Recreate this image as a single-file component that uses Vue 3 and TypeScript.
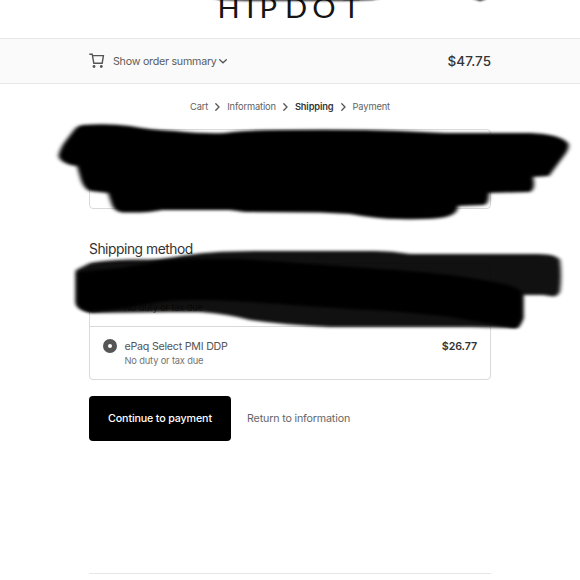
<script setup lang="ts">
interface Crumb {
  label: string
  current?: boolean
}

const crumbs: Crumb[] = [
  { label: 'Cart' },
  { label: 'Information' },
  { label: 'Shipping', current: true },
  { label: 'Payment' },
]
</script>

<template>
  <div class="page">
    <header class="brand">
      <svg class="logo" width="580" height="38" viewBox="0 0 580 38" aria-label="HIPDOT">
        <text transform="scale(1.1 1)" x="197.8 223.9 236 259.1 283.8 311.6" y="17.8">HIPDOT</text>
      </svg>
    </header>

    <section class="summary">
      <div class="column summary-row">
        <svg class="cart" width="16" height="16" viewBox="0 0 16 16">
          <path d="M.8 1.2H3.2L4.8 10.2H13.2L14.4 2.6H3.5" />
          <circle cx="5" cy="13.5" r="1.4" />
          <circle cx="12.3" cy="13.5" r="1.4" />
        </svg>
        <span class="toggle">Show order summary</span>
        <svg class="caret" width="8" height="6" viewBox="0 0 8 6"><path d="M.7 1.7L4 4.8L7.3 1.7" /></svg>
        <strong class="total">$47.75</strong>
      </div>
    </section>

    <main class="column">
      <nav class="crumbs">
        <template v-for="(crumb, i) in crumbs" :key="crumb.label">
          <svg v-if="i > 0" width="5" height="8" viewBox="0 0 5 8"><path d="M.8 .8L4 4L.8 7.2" /></svg>
          <span :class="{ current: crumb.current }">{{ crumb.label }}</span>
        </template>
      </nav>

      <section class="card review"></section>

      <h2>Shipping method</h2>
      <section class="card methods">
        <div class="method first">
          <small>No duty or tax due</small>
        </div>
        <div class="method">
          <span class="radio"></span>
          <div class="details">
            <span class="name">ePaq Select PMI DDP</span>
            <small>No duty or tax due</small>
          </div>
          <strong class="price">$26.77</strong>
        </div>
      </section>

      <div class="actions">
        <button type="button">Continue to payment</button>
        <a>Return to information</a>
      </div>
      <footer></footer>
    </main>

    <svg class="scribbles" width="580" height="580" viewBox="0 0 580 580">
      <defs>
        <filter id="soft" x="-5%" y="-15%" width="110%" height="130%"><feGaussianBlur stdDeviation="1.9 1.4" /></filter>
        <filter id="thin" filterUnits="userSpaceOnUse" x="180" y="-10" width="330" height="24"><feGaussianBlur stdDeviation="1" /></filter>
      </defs>
      <path filter="url(#thin)" d="M205 -4H390L372 0L350 .8H245L220 0ZM466 -4L480 1L486 -1V-4Z" />
      <path filter="url(#soft)" d="M82 125Q108 123 130 126Q150 130 175 131Q205 134 225 133Q245 130 280 130Q350 129 400 131L445 133H530Q560 134 568 143Q570 147 566 153L549 176L533 177Q536 189 530 192L489 193Q489 204 484 205L458 206Q458 214 446 217Q430 220 398 219Q378 219 350 214L320 212.5L245 212L230 210H162Q150 213 122 212.5Q114 211 112 205L108 193L90 191Q84 189 81 180L77 166Q61 164 58.5 156Q59 151 64 143L74 130Q77 126 82 125Z" />
      <path class="wash" filter="url(#soft)" d="M76 270L90 263Q104 260 130 259.5Q160 260 175 257Q207 251 255 251H375Q392 251 410 254H538Q556 254 560 260Q562 276 560 291Q558 298 550 296L543 295H523L523 318Q520 328 515 328L470 327H330Q285 325 250 320Q228 314 200 312H170L92 313Q76 310 76 302Z" />
      <path filter="url(#soft)" d="M77 272L120 268L150 263Q175 258 240 259Q300 263 380 269Q450 273 500 283Q520 287 522 293V318L517 328Q490 324 450 317Q400 311 350 309L250 302Q190 298 160 302L125 308L90 312Q77 309 77 302Z" />
    </svg>
  </div>
</template>

<style>
body {
  background: #fff;
}
</style>

<style scoped>
.page {
  position: relative;
  height: 580px;
  overflow: hidden;
  background: #fff;
  color: #333;
  font-family: Inter, sans-serif;
}
* {
  box-sizing: border-box;
}
.brand {
  height: 38px;
}
.logo {
  display: block;
}
.logo text {
  font: 400 26.5px Lato, sans-serif;
  fill: #151515;
}
.column {
  width: 402px;
  margin-left: 89px;
}
.summary {
  height: 46px;
  background: #fafafa;
  border-top: 1px solid #e8e8e8;
  border-bottom: 1px solid #e8e8e8;
}
.summary-row {
  display: flex;
  align-items: center;
  height: 44px;
}
svg path {
  stroke-linecap: round;
}
.cart {
  margin-right: 8px;
  fill: #555;
}
.cart path {
  fill: none;
  stroke: #555;
  stroke-width: 1.4;
}
.toggle {
  font-size: 10.7px;
  letter-spacing: -0.25px;
  color: #5c5c5c;
}
.caret {
  margin-left: 2px;
}
.caret path,
.crumbs path {
  fill: none;
  stroke: #555;
  stroke-width: 1.3;
}
.total {
  margin-left: auto;
  font-size: 13.5px;
  font-weight: 500;
}
.crumbs {
  display: flex;
  align-items: center;
  justify-content: center;
  gap: 7px;
  height: 45px;
  font-size: 9.3px;
  letter-spacing: -0.13px;
  color: #626262;
}
.crumbs .current {
  color: #333;
  font-weight: 600;
}
.card {
  border: 1px solid #d9d9d9;
  border-radius: 4px;
}
.review {
  height: 80px;
}
h2 {
  margin: 31px 0 0;
  font-size: 13.8px;
  letter-spacing: -0.45px;
  line-height: 18px;
  font-weight: 400;
}
.methods {
  height: 117px;
  margin-top: 5px;
}
.method {
  display: flex;
  height: 53px;
  padding: 12px 13px 0;
}
.method.first {
  height: 63px;
  padding: 37px 0 0 34px;
  border-bottom: 1px solid #d9d9d9;
}
small {
  font-size: 9.3px;
  letter-spacing: -0.16px;
  line-height: 13px;
  color: #737373;
}
.radio {
  width: 14px;
  height: 14px;
  border: 5.5px solid #555;
  border-radius: 50%;
  background: #fff;
}
.details {
  display: flex;
  flex-direction: column;
  margin-left: 7.5px;
}
.name {
  font-size: 10.7px;
  letter-spacing: -0.24px;
  line-height: 15px;
  color: #545454;
}
.price {
  margin-left: auto;
  font-size: 10.7px;
  letter-spacing: -0.1px;
  line-height: 15px;
  font-weight: 600;
}
.actions {
  display: flex;
  align-items: center;
  gap: 16px;
  margin-top: 16px;
}
button {
  width: 142px;
  height: 45px;
  padding: 0;
  border: 0;
  border-radius: 4px;
  background: #000;
  color: #fff;
  font: 500 10.7px Inter, sans-serif;
  letter-spacing: -0.14px;
}
.actions a {
  font-size: 10.7px;
  letter-spacing: -0.16px;
  color: #666;
}
footer {
  margin-top: 132px;
  border-top: 1px solid #e6e6e6;
}
.scribbles {
  position: absolute;
  inset: 0;
  pointer-events: none;
}
.wash {
  opacity: 0.93;
}
</style>
